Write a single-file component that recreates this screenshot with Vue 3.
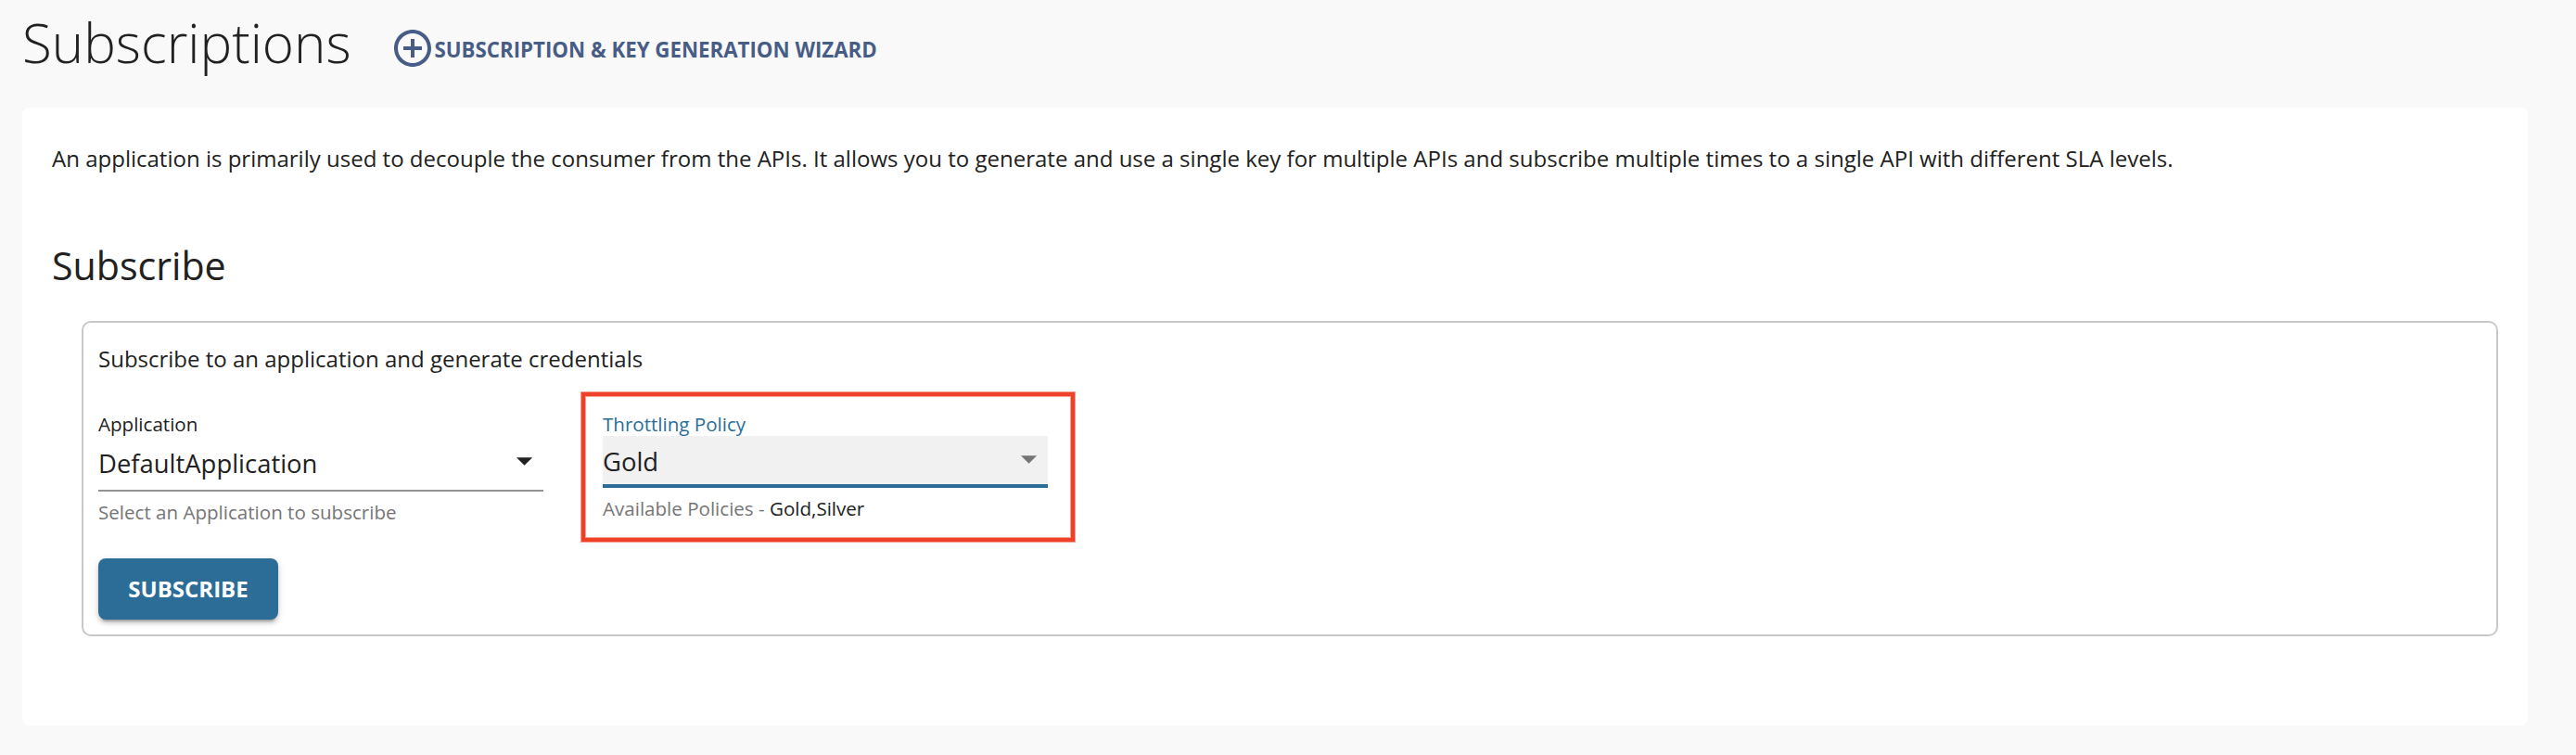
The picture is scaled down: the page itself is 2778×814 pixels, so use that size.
<script setup>
import { ref } from 'vue'

const application = ref('DefaultApplication')
const policy = ref('Gold')
const policies = ['Gold', 'Silver']
</script>

<template>
  <main class="page">
    <header class="page-header">
      <h1 class="page-title">Subscriptions</h1>
      <a class="wizard">
        <svg class="wizard-icon" viewBox="0 0 24 24">
          <path d="M13 7h-2v4H7v2h4v4h2v-4h4v-2h-4V7zm-1-5C6.48 2 2 6.48 2 12s4.48 10 10 10 10-4.48 10-10S17.52 2 12 2zm0 18c-4.41 0-8-3.59-8-8s3.59-8 8-8 8 3.59 8 8-3.59 8-8 8z" />
        </svg>
        <span>SUBSCRIPTION &amp; KEY GENERATION WIZARD</span>
      </a>
    </header>

    <section class="card">
      <p class="intro">An application is primarily used to decouple the consumer from the APIs. It allows you to generate and use a single key for multiple APIs and subscribe multiple times to a single API with different SLA levels.</p>
      <h2 class="section-title">Subscribe</h2>

      <div class="panel">
        <p class="panel-text">Subscribe to an application and generate credentials</p>
        <div class="fields">
          <div class="field">
            <label class="label">Application</label>
            <div class="select">
              <span>{{ application }}</span>
              <svg class="arrow" viewBox="0 0 24 24"><path d="M7 10l5 5 5-5z" /></svg>
            </div>
            <p class="helper">Select an Application to subscribe</p>
          </div>
          <div class="highlight">
            <div class="field focused">
              <label class="label">Throttling Policy</label>
              <div class="select">
                <span>{{ policy }}</span>
                <svg class="arrow" viewBox="0 0 24 24"><path d="M7 10l5 5 5-5z" /></svg>
              </div>
              <p class="helper">Available Policies - <span class="policies">{{ policies.join(',') }}</span></p>
            </div>
          </div>
        </div>
        <button class="subscribe">SUBSCRIBE</button>
      </div>
    </section>
  </main>
</template>

<style>
body {
  background: #f9f9f9;
}
</style>

<style scoped>
* {
  box-sizing: border-box;
}
.page {
  height: 814px;
  padding: 0 52px 0 24px;
  overflow: hidden;
  background: #f9f9f9;
  color: #212121;
  font-family: "Open Sans", sans-serif;
}
h1,
h2,
p {
  margin: 0;
  white-space: nowrap;
}
.page-header {
  display: flex;
  height: 116px;
  padding-top: 10px;
}
.page-title {
  width: 396.5px;
  font-size: 58.28px;
  font-weight: 300;
  line-height: 72px;
}
.wizard {
  display: flex;
  height: 48px;
  margin-top: 18px;
  color: #485d86;
  font-size: 22.28px;
  font-weight: 700;
  line-height: 51px;
  white-space: nowrap;
}
.wizard-icon {
  width: 48px;
  height: 48px;
  fill: currentColor;
}
.card {
  height: 666px;
  padding: 37px 32px 0;
  border-radius: 8px;
  background: #fff;
}
.intro {
  font-size: 24px;
  letter-spacing: 0.008px;
  line-height: 35px;
}
.section-title {
  margin-top: 71px;
  font-size: 41.14px;
  font-weight: 400;
  line-height: 54px;
}
.panel {
  height: 340px;
  margin: 33px 0 0 32px;
  padding: 20px 16px 0;
  border: 2px solid #c9c9c9;
  border-radius: 10px;
}
.panel-text {
  font-size: 24px;
  line-height: 37px;
}
.fields {
  display: flex;
  gap: 40px;
  height: 163px;
  margin-top: 17px;
}
.field {
  width: 480px;
}
.fields > .field {
  padding-top: 20px;
}
.highlight {
  width: 532px;
  height: 161px;
  margin: 1px;
  padding: 15px 19px 0;
  border: 4px solid #ee4128;
  box-shadow: 0 0 0 1px #f7a08f, inset 0 0 0 1px #f7a08f;
}
.label {
  display: block;
  height: 28px;
  font-size: 20.57px;
  line-height: 30px;
}
.select {
  display: flex;
  justify-content: space-between;
  height: 60px;
  padding-top: 10px;
  border-bottom: 2px solid #949494;
  font-size: 27.43px;
  line-height: 39px;
}
.arrow {
  width: 41.14px;
  height: 41.14px;
  margin-top: -4px;
  fill: #212121;
}
.helper {
  margin-top: 7px;
  color: #757575;
  font-size: 20.57px;
  line-height: 30px;
}
.focused .label {
  color: #2a6e98;
}
.focused .select {
  height: 56px;
  padding-top: 8px;
  border-bottom: 4px solid #2a6e98;
  background: #f1f1f1;
}
.focused .arrow {
  fill: #757575;
}
.policies {
  color: #212121;
}
.subscribe {
  display: block;
  width: 194px;
  height: 66px;
  margin-top: 17px;
  padding: 0;
  border: 0;
  border-radius: 8px;
  background: #2c6d98;
  box-shadow: 0 6px 2px -4px rgba(0, 0, 0, 0.2), 0 4px 4px rgba(0, 0, 0, 0.14), 0 2px 10px rgba(0, 0, 0, 0.12);
  color: #fff;
  font-family: inherit;
  font-size: 24px;
  font-weight: 700;
  line-height: 66px;
}
</style>
